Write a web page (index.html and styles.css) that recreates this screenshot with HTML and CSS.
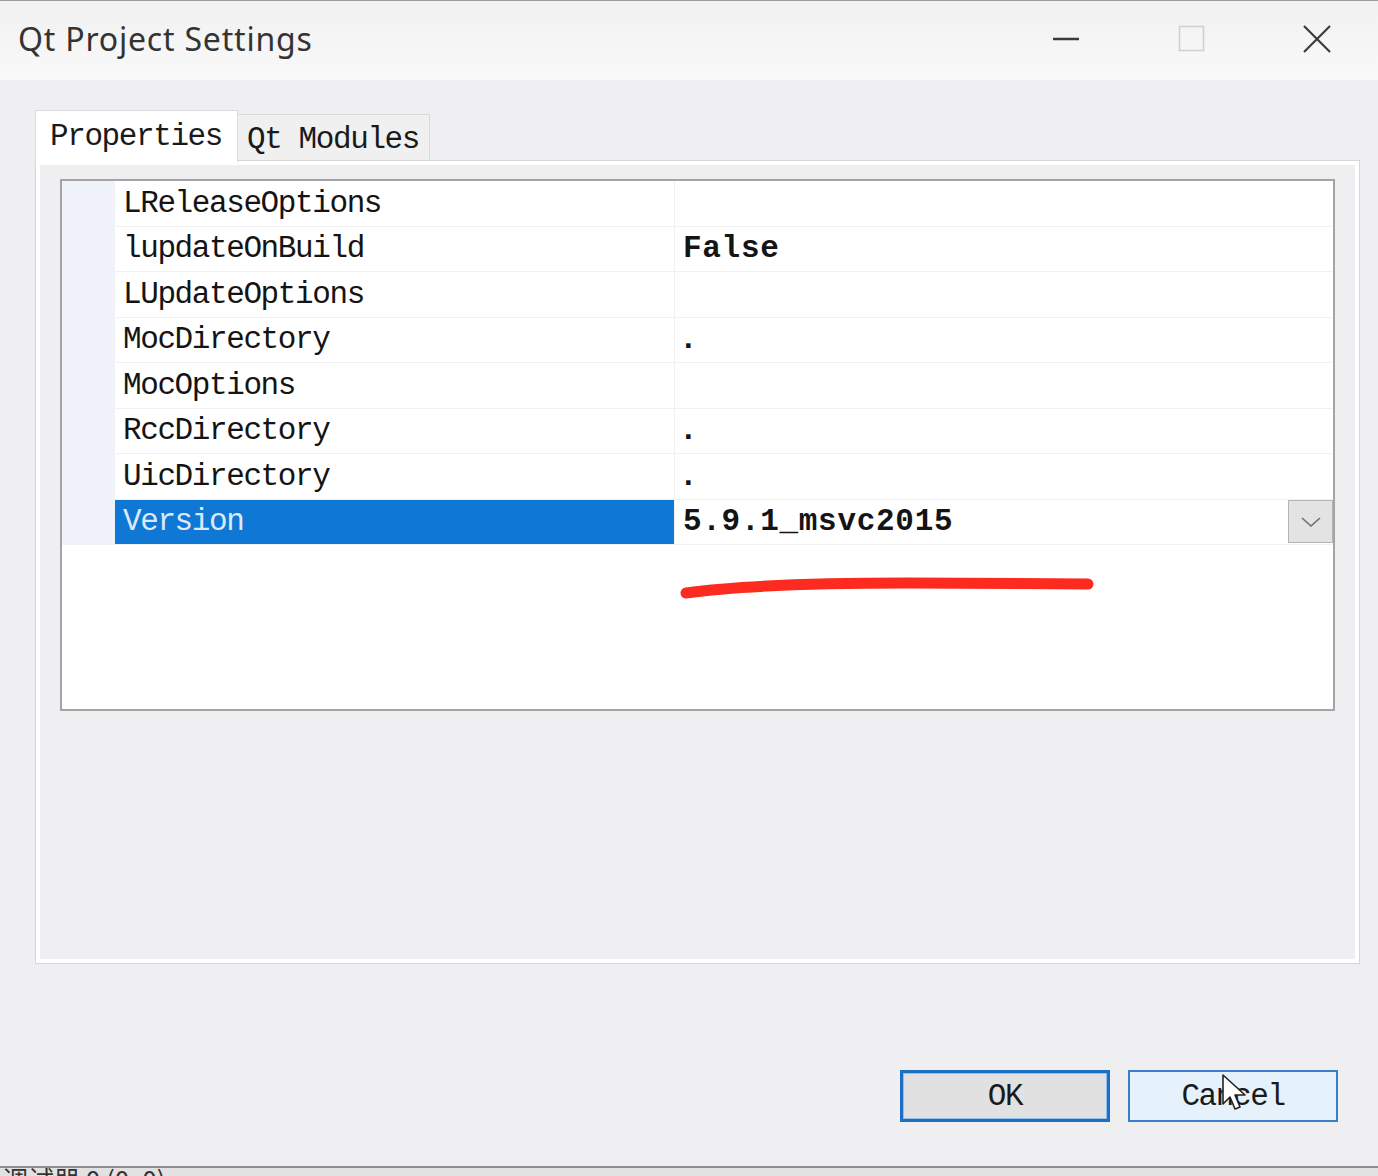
FILE: index.html
```html
<!DOCTYPE html>
<html>
<head>
<meta charset="utf-8">
<link rel="stylesheet" href="styles.css">
</head>
<body>
<div class="window">
  <div class="titlebar">
    <div class="title">Qt Project Settings</div>
    <div class="controls">
      <div class="ctl ctl-min"><svg width="28" height="28" viewBox="0 0 28 28"><line x1="1" y1="14" x2="27" y2="14" stroke="#3a3a3a" stroke-width="2.5"/></svg></div>
      <div class="ctl ctl-max"><svg width="28" height="28" viewBox="0 0 28 28"><rect x="1.5" y="1.5" width="24" height="24" fill="none" stroke="#cfcfcf" stroke-width="1.5"/></svg></div>
      <div class="ctl ctl-close"><svg width="28" height="28" viewBox="0 0 28 28"><line x1="1" y1="1" x2="27" y2="27" stroke="#3a3a3a" stroke-width="2.2"/><line x1="27" y1="1" x2="1" y2="27" stroke="#3a3a3a" stroke-width="2.2"/></svg></div>
    </div>
  </div>
  <div class="content">
    <div class="tabs">
      <div class="tab tab-active">Properties</div>
      <div class="tab">Qt Modules</div>
    </div>
    <div class="panel">
      <div class="grid">
        <div class="rows">
          <div class="gutter"></div><div class="name">LReleaseOptions</div><div class="value"></div>
          <div class="gutter"></div><div class="name">lupdateOnBuild</div><div class="value">False</div>
          <div class="gutter"></div><div class="name">LUpdateOptions</div><div class="value"></div>
          <div class="gutter"></div><div class="name">MocDirectory</div><div class="value value-dot">.</div>
          <div class="gutter"></div><div class="name">MocOptions</div><div class="value"></div>
          <div class="gutter"></div><div class="name">RccDirectory</div><div class="value value-dot">.</div>
          <div class="gutter"></div><div class="name">UicDirectory</div><div class="value value-dot">.</div>
          <div class="gutter"></div><div class="name name-selected">Version</div><div class="value value-combo"><span>5.9.1_msvc2015</span><div class="dropdown"><svg width="24" height="14" viewBox="0 0 24 14"><polyline points="3,3 12,11 21,3" fill="none" stroke="#6e6e6e" stroke-width="1.6"/></svg></div></div>
        </div>
        <svg class="annotation" width="440" height="30" viewBox="0 0 440 30"><path d="M8 22 Q 80 12 230 12 L 410 13" fill="none" stroke="#fc2a1f" stroke-width="11" stroke-linecap="round"/></svg>
      </div>
    </div>
    <div class="buttons">
      <div class="btn btn-ok">OK</div>
      <div class="btn btn-cancel">Cancel
        <svg class="cursor" width="26" height="40" viewBox="0 0 26 40"><path d="M1 1 L1 30 L8 23 L13 35 L18 33 L13 21 L23 21 Z" fill="#ffffff" stroke="#222" stroke-width="1.6" stroke-linejoin="round"/></svg>
      </div>
    </div>
  </div>
  <div class="footer"><span>调试器 0 (0x0)</span></div>
</div>
</body>
</html>
```
FILE: styles.css
```css
* { box-sizing: border-box; }
html, body { margin: 0; padding: 0; }
body {
  background: #efeff1;
  font-family: "Liberation Mono", "DejaVu Sans Mono", monospace;
}
.window {
  width: 1378px;
  height: 1176px;
  display: flex;
  flex-direction: column;
  overflow: hidden;
}
.titlebar {
  height: 80px;
  flex: none;
  display: flex;
  align-items: flex-start;
  border-top: 1px solid #9c9c9c;
  background: linear-gradient(#f1f1f1, #f9f9f9);
}
.title {
  font-family: "Noto Sans", "Open Sans", sans-serif;
  font-size: 32px;
  color: #333;
  padding-left: 18px;
  padding-top: 16px;
  letter-spacing: 0.8px;
}
.controls {
  margin-left: auto;
  display: flex;
}
.ctl {
  height: 76px;
  display: flex;
  justify-content: center;
  padding-top: 24px;
}
.ctl-min { width: 126px; }
.ctl-max { width: 126px; }
.ctl-close { width: 123px; }

.content {
  flex: 1;
  display: flex;
  flex-direction: column;
  padding: 30px 18px 0 35px;
}
.tabs {
  height: 52px;
  display: flex;
  align-items: flex-end;
  position: relative;
  z-index: 1;
}
.tab {
  font-size: 31px;
  letter-spacing: -1.4px;
  color: #1a1a1a;
}
.tab-active {
  width: 203px;
  height: 52px;
  background: #ffffff;
  border: 1px solid #dcdcdc;
  border-bottom: none;
  padding: 8px 0 0 14px;
}
.tab:not(.tab-active) {
  width: 192px;
  height: 46px;
  margin-bottom: 2px;
  background: #f0f0f0;
  border: 1px solid #dadada;
  border-left: none;
  border-bottom: none;
  padding: 7px 0 0 9px;
}
.panel {
  margin-top: -2px;
  height: 804px;
  border: 1px solid #d6d6d6;
  box-shadow: inset 0 0 0 4px #ffffff;
  background: #efeff2;
  padding: 18px 24px 0 24px;
}
.grid {
  position: relative;
  height: 532px;
  background: #ffffff;
  border: 2px solid #a4a4a4;
}
.rows {
  display: grid;
  grid-template-columns: 53px 560px 1fr;
  grid-auto-rows: 45.5px;
}
.gutter {
  background: #eff2f9;
}
.name, .value {
  display: flex;
  align-items: center;
  padding-left: 8px;
  border-bottom: 1px solid #f1f1f3;
  font-size: 31px;
  color: #141414;
  white-space: nowrap;
}
.name {
  letter-spacing: -1.4px;
  border-right: 1px solid #f1f1f3;
}
.value {
  font-weight: bold;
  letter-spacing: 0.7px;
}
.value-dot {
  padding-left: 4px;
}
.name-selected {
  background: #0f77d4;
  color: #dbe9f8;
}
.value-combo {
  justify-content: space-between;
  padding-right: 0;
}
.dropdown {
  width: 45px;
  height: 43px;
  background: #e3e3e3;
  border: 1px solid #b4b4b4;
  display: flex;
  align-items: center;
  justify-content: center;
}
.annotation {
  position: absolute;
  left: 616px;
  top: 390px;
}
.buttons {
  margin-top: 106px;
  display: flex;
  justify-content: flex-end;
  gap: 18px;
  padding-right: 22px;
}
.btn {
  width: 210px;
  height: 52px;
  display: flex;
  align-items: center;
  justify-content: center;
  font-size: 31px;
  letter-spacing: -1.4px;
  color: #1a1a1a;
  position: relative;
}
.btn-ok {
  background: #e1e1e1;
  border: 3px solid #1b6fc4;
  box-shadow: inset 0 0 0 1px #8fc0ef;
}
.btn-cancel {
  background: #e5f1fb;
  border: 2px solid #3b7fc6;
}
.cursor {
  position: absolute;
  left: 92px;
  top: 2px;
}
.footer {
  height: 10px;
  flex: none;
  border-top: 2px solid #8e8e8e;
  background: #e2e2e2;
  overflow: hidden;
  font-family: "Noto Sans CJK SC", sans-serif;
  font-size: 26px;
  line-height: 26px;
  color: #333;
  padding-left: 2px;
}
.footer span {
  display: block;
  margin-top: -2px;
}
```
